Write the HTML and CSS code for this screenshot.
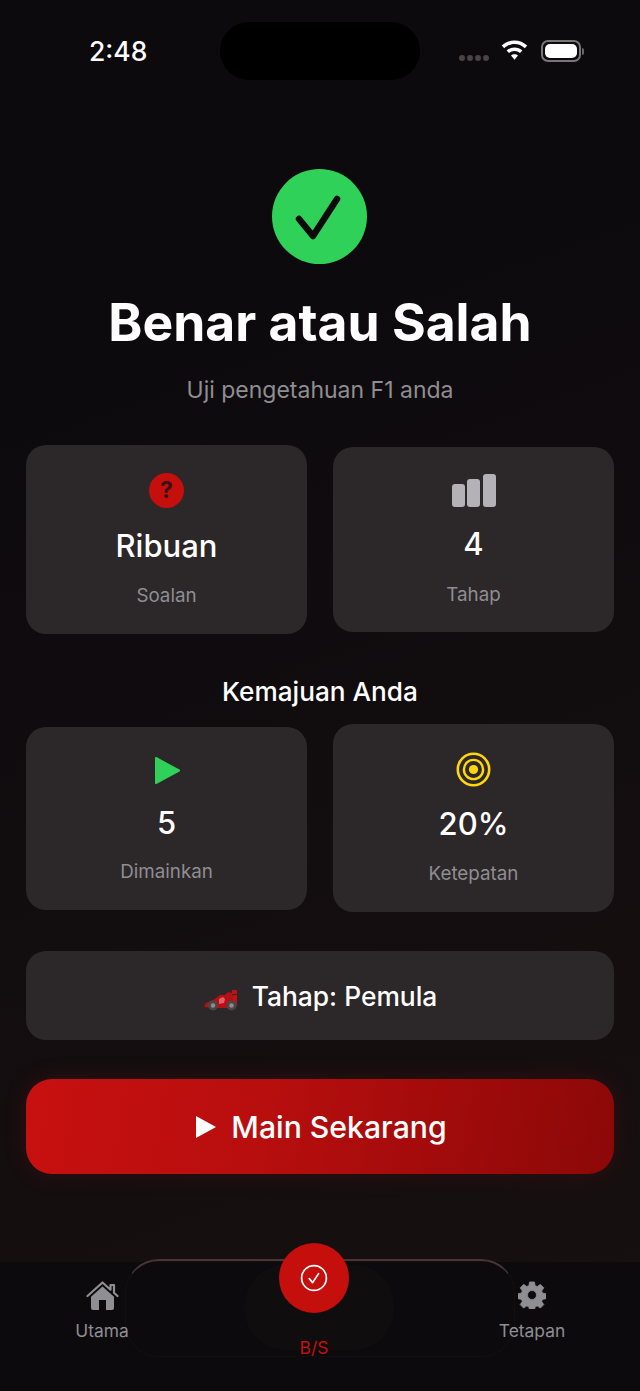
FILE: index.html
```html
<!DOCTYPE html>
<html lang="ms">
<head>
  <meta charset="UTF-8" />
  <meta name="viewport" content="width=device-width, initial-scale=1.0"/>
  <title>Benar atau Salah</title>
  <link rel="stylesheet" href="styles.css">
</head>
<body>
  <div class="screen">
    <div class="status-bar">
      <div class="time">2:48</div>
      <div class="island"></div>
      <div class="status-icons">
        <div class="signal"><span></span><span></span><span></span><span></span></div>
        <svg class="wifi" width="27" height="21" viewBox="0 0 27 21">
          <path d="M13.5 0.5C8.6 0.5 4.2 2.4 0.8 5.6L3.2 8.2C6 5.6 9.6 4 13.5 4s7.5 1.6 10.3 4.2l2.4-2.6C22.8 2.4 18.4 0.5 13.5 0.5z" fill="#fff"/>
          <path d="M13.5 7.4c-3 0-5.8 1.2-7.9 3.1l2.4 2.6c1.5-1.3 3.4-2.2 5.5-2.2s4 .9 5.5 2.2l2.4-2.6c-2.1-1.9-4.9-3.1-7.9-3.1z" fill="#fff"/>
          <path d="M13.5 14.2c-1.4 0-2.6.5-3.5 1.3l3.5 4.3 3.5-4.3c-.9-.8-2.1-1.3-3.5-1.3z" fill="#fff"/>
        </svg>
        <div class="battery"><div class="battery-fill"></div></div>
        <div class="battery-cap"></div>
      </div>
    </div>

    <main class="content">
      <div class="hero-icon">
        <svg width="95" height="95" viewBox="0 0 95 95">
          <path d="M27 50L41 67L65 30" fill="none" stroke="#0c0a0d" stroke-width="6.5" stroke-linecap="round" stroke-linejoin="round"/>
        </svg>
      </div>
      <h1>Benar atau Salah</h1>
      <p class="subtitle">Uji pengetahuan F1 anda</p>

      <div class="card-row first-row">
        <div class="card card-soalan">
          <div class="card-icon">
            <div class="question-icon">?</div>
          </div>
          <div class="value">Ribuan</div>
          <div class="label">Soalan</div>
        </div>
        <div class="card card-tahap">
          <div class="card-icon">
            <div class="bars"><span class="bar-s"></span><span class="bar-m"></span><span class="bar-l"></span></div>
          </div>
          <div class="value">4</div>
          <div class="label">Tahap</div>
        </div>
      </div>

      <h2>Kemajuan Anda</h2>

      <div class="card-row second-row">
        <div class="card card-dimainkan">
          <div class="card-icon">
            <svg class="play-icon" width="27" height="29" viewBox="0 0 27 29">
              <path d="M2 2L25 14.5L2 27z" fill="#30d158" stroke="#30d158" stroke-width="2" stroke-linejoin="round"/>
            </svg>
          </div>
          <div class="value">5</div>
          <div class="label">Dimainkan</div>
        </div>
        <div class="card card-ketepatan">
          <div class="card-icon">
            <svg width="35" height="35" viewBox="0 0 35 35">
              <circle cx="17.5" cy="17.5" r="15.7" fill="none" stroke="#ffd60a" stroke-width="2.6"/>
              <circle cx="17.5" cy="17.5" r="9.6" fill="none" stroke="#ffd60a" stroke-width="2.4"/>
              <circle cx="17.5" cy="17.5" r="4.6" fill="#ffd60a"/>
            </svg>
          </div>
          <div class="value">20%</div>
          <div class="label">Ketepatan</div>
        </div>
      </div>

      <div class="level">
        <svg class="car" width="35" height="25" viewBox="0 0 35 25">
          <path d="M1 20L3 16L12 12L17 8L22 8L25 5L29 6L30 10L34 10L34 19L28 21L12 21z" fill="#b80f14"/>
          <path d="M29 3h5v4h-5zM30 8h4v8h-4z" fill="#c01216"/>
          <path d="M16 12l4-2 2 2-1 4-5 1z" fill="#e0606a"/>
          <circle cx="10" cy="18.5" r="5" fill="#4a4647"/>
          <circle cx="10" cy="18.5" r="2.2" fill="#8f8b8c"/>
          <circle cx="28.5" cy="18.5" r="5" fill="#4a4647"/>
          <circle cx="28.5" cy="18.5" r="2.2" fill="#8f8b8c"/>
        </svg>
        <span>Tahap: Pemula</span>
      </div>

      <button class="play-button">
        <svg width="20" height="22" viewBox="0 0 20 22"><path d="M0 0L20 11L0 22z" fill="#fff"/></svg>
        <span>Main Sekarang</span>
      </button>
    </main>

    <nav class="tab-bar">
      <div class="tab-glass"></div>
      <div class="tab-blob"></div>
      <div class="tab">
        <svg class="tab-icon" width="33" height="30" viewBox="0 0 33 30">
          <path d="M1.5 15L16.5 1.5L24.5 8.7V4h3.5v7.8L31.5 15" fill="none" stroke="#8e8e93" stroke-width="2.2" stroke-linecap="round" stroke-linejoin="round"/>
          <path fill-rule="evenodd" d="M16.5 5.5L28 15.8V27a2 2 0 0 1-2 2H7a2 2 0 0 1-2-2V15.8zM13 19v10h7V19z" fill="#8e8e93"/>
        </svg>
        <span>Utama</span>
      </div>
      <div class="tab tab-active">
        <div class="tab-button">
          <svg width="28" height="28" viewBox="0 0 28 28">
            <circle cx="14" cy="14" r="12.4" fill="none" stroke="#fff" stroke-width="1.7"/>
            <path d="M9.3 14.6L12.6 18.6L18.6 9.6" fill="none" stroke="#fff" stroke-width="1.7" stroke-linecap="round" stroke-linejoin="round"/>
          </svg>
        </div>
        <span>B/S</span>
      </div>
      <div class="tab">
        <svg class="tab-icon" width="28" height="28" viewBox="0 0 30 30">
          <path fill-rule="evenodd" d="M12.4 1h5.2l.8 4 2.2.9 3.4-2.3 3.7 3.7-2.3 3.4.9 2.2 4 .8v5.2l-4 .8-.9 2.2 2.3 3.4-3.7 3.7-3.4-2.3-2.2.9-.8 4h-5.2l-.8-4-2.2-.9-3.4 2.3-3.7-3.7 2.3-3.4-.9-2.2-4-.8v-5.2l4-.8.9-2.2-2.3-3.4 3.7-3.7 3.4 2.3 2.2-.9zM15 10.2a4.8 4.8 0 1 0 0 9.6a4.8 4.8 0 0 0 0-9.6z" fill="#8e8e93" stroke="#8e8e93" stroke-width="0.8" stroke-linejoin="round"/>
        </svg>
        <span class="tab-label-low">Tetapan</span>
      </div>
    </nav>
  </div>
</body>
</html>
```

FILE: styles.css
```css
* {
  box-sizing: border-box;
}

body {
  margin: 0;
  font-family: 'Inter', 'Liberation Sans', sans-serif;
  background: #0c0a0d;
  color: #fff;
}

.screen {
  position: relative;
  width: 640px;
  height: 1391px;
  overflow: hidden;
  background: linear-gradient(160deg, #0c0a0d 0%, #0d0a0d 25%, #120d0f 60%, #181010 100%);
}

/* status bar */
.status-bar {
  display: grid;
  grid-template-columns: 220px 200px 220px;
  height: 80px;
  padding-top: 22px;
}

.time {
  padding-left: 89px;
  font-size: 26.5px;
  font-weight: 500;
  line-height: 58px;
}

.island {
  height: 58px;
  background: #000;
  border-radius: 29px;
}

.status-icons {
  display: flex;
  align-items: center;
  padding-left: 39px;
  height: 58px;
}

.signal {
  display: flex;
  gap: 2px;
  margin-top: 14px;
}

.signal span {
  width: 6px;
  height: 6px;
  border-radius: 50%;
  background: #4a4243;
}

.wifi {
  margin-left: 12px;
  margin-top: -1px;
}

.battery {
  width: 40px;
  height: 22px;
  margin-left: 13px;
  padding: 2px;
  border: 2px solid #7a7677;
  border-radius: 7px;
}

.battery-fill {
  height: 100%;
  background: #fff;
  border-radius: 5px;
}

.battery-cap {
  width: 2px;
  height: 7px;
  margin-left: 1px;
  background: #6b6667;
  border-radius: 0 2px 2px 0;
}

/* main column */
.content {
  display: flex;
  flex-direction: column;
  align-items: center;
  padding: 0 26px;
}

.hero-icon {
  width: 95px;
  height: 95px;
  margin-top: 89px;
  margin-right: 1px;
  background: #30d158;
  border-radius: 50%;
}

.hero-icon svg {
  display: block;
}

h1 {
  margin: 28px 0 0;
  font-size: 51.6px;
  font-weight: 700;
  line-height: 60px;
  text-align: center;
}

.subtitle {
  margin: 23px 0 0;
  font-size: 23px;
  line-height: 30px;
  color: #8e8e93;
}

h2 {
  margin: 43px 0 0;
  font-size: 26.2px;
  font-weight: 500;
  line-height: 30px;
}

.card-row {
  display: flex;
  align-items: center;
  gap: 26px;
  width: 100%;
}

.first-row {
  margin-top: 40px;
}

.second-row {
  margin-top: 17px;
}

.card {
  flex: 1;
  display: flex;
  flex-direction: column;
  align-items: center;
  background: #2c2728;
  border-radius: 20px;
}

.card-icon {
  display: flex;
  align-items: center;
  justify-content: center;
  height: 35px;
}

.value {
  font-size: 31px;
  font-weight: 500;
  line-height: 40px;
}

.label {
  font-size: 18.8px;
  line-height: 24px;
  color: #8e8e93;
}

.card-soalan {
  padding: 28px 0 26px;
}
.card-soalan .value {
  margin-top: 18px;
}
.card-soalan .label {
  margin-top: 18px;
}

.card-tahap {
  padding: 26px 0 25px;
}
.card-tahap .value {
  margin-top: 16px;
}
.card-tahap .label {
  margin-top: 19px;
}

.card-dimainkan {
  padding: 26px 0 26px;
}
.card-dimainkan .value {
  margin-top: 15px;
}
.card-dimainkan .label {
  margin-top: 17px;
}

.card-ketepatan {
  padding: 28px 0 26px;
}
.card-ketepatan .value {
  margin-top: 17px;
}
.card-ketepatan .label {
  margin-top: 18px;
}

.question-icon {
  width: 35px;
  height: 35px;
  background: #c40f0c;
  border-radius: 50%;
  color: #3a1214;
  font-size: 23px;
  font-weight: 700;
  line-height: 35px;
  text-align: center;
}

.bars {
  display: flex;
  align-items: flex-end;
  gap: 2.5px;
  height: 33px;
}

.bars span {
  width: 13px;
  background: #b4b2b6;
  border-radius: 3px;
}

.bar-s {
  height: 23px;
}
.bar-m {
  height: 28px;
}
.bar-l {
  height: 33px;
}

.play-icon {
  margin-left: 2px;
}

.level {
  display: flex;
  align-items: center;
  justify-content: center;
  gap: 14px;
  width: 100%;
  height: 89px;
  margin-top: 39px;
  background: #2c2728;
  border-radius: 20px;
  font-size: 26.4px;
  font-weight: 500;
}

.car {
  margin-top: 7px;
}

.play-button {
  display: flex;
  align-items: center;
  justify-content: center;
  gap: 15px;
  width: 100%;
  height: 95px;
  margin-top: 39px;
  padding: 0 0 0 3px;
  border: 0;
  border-radius: 26px;
  background: linear-gradient(100deg, #c81010 0%, #b80e0e 40%, #8c0808 100%);
  box-shadow: 0 0 24px rgba(200, 16, 16, 0.16);
  color: #fff;
  font-family: inherit;
  font-size: 30.2px;
  font-weight: 500;
}

/* tab bar */
.tab-bar {
  position: absolute;
  left: 0;
  right: 0;
  bottom: 0;
  display: grid;
  grid-template-columns: 204px 220px 216px;
  height: 129px;
  background: #0c0a0d;
}

.tab-glass {
  position: absolute;
  top: -3px;
  left: 125px;
  width: 390px;
  height: 98px;
  border: 1px solid rgba(140, 110, 110, 0.05);
  border-top: 2px solid #4a3436;
  border-radius: 34px;
}

.tab-blob {
  position: absolute;
  top: 3px;
  left: 245px;
  width: 149px;
  height: 85px;
  background: #100d0f;
  border-radius: 40px;
}

.tab {
  position: relative;
  display: flex;
  flex-direction: column;
  align-items: center;
  font-size: 17.4px;
  line-height: 22px;
  color: #8e8e93;
}

.tab-icon {
  margin-top: 19px;
}

.tab span {
  margin-top: 9px;
}

.tab .tab-label-low {
  margin-top: 11px;
}

.tab-active {
  color: #c40f0c;
}

.tab-button {
  display: flex;
  align-items: center;
  justify-content: center;
  width: 70px;
  height: 70px;
  margin-top: -19px;
  background: #c40f0c;
  border-radius: 50%;
}

.tab-active span {
  margin-top: 24px;
}
```
